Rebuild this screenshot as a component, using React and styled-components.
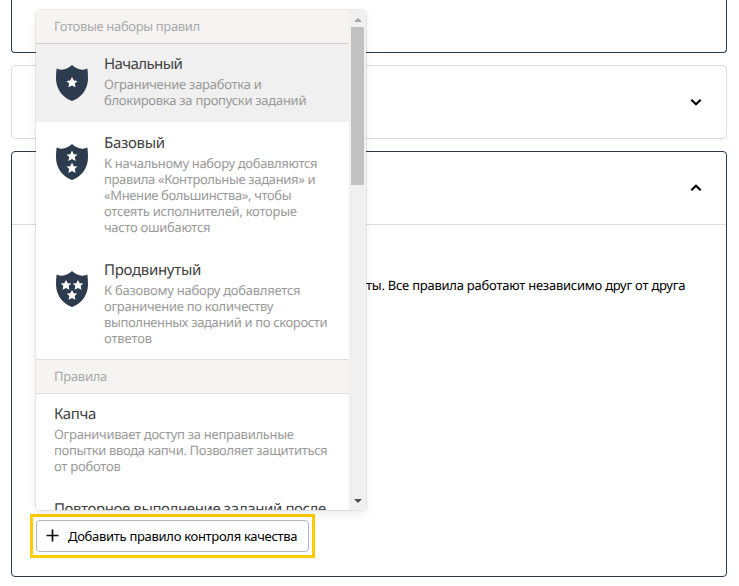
import React from "react";
import styled, { createGlobalStyle } from "styled-components";

const GlobalStyle = createGlobalStyle`
  * { box-sizing: border-box; }
  html, body { margin: 0; height: 586px; overflow: hidden; background: #fff; }
  body { font: 13px/16px "Noto Sans", "Open Sans", sans-serif; color: #000; text-rendering: geometricPrecision; }
`;

const Page = styled.main`
  position: relative;
  display: flex;
  flex-direction: column;
  gap: 12px;
  height: 586px;
  padding: 0 12px 9px 11px;
`;

const Card = styled.section`
  border: 1px solid ${(p) => (p.$active ? "#2b3a4e" : "#dcdcdc")};
  border-radius: 4px;
  background: #fff;
`;

const CardTail = styled(Card)`
  height: 53px;
  border-top: 0;
  border-radius: 0 0 4px 4px;
`;

const ClosedCard = styled(Card)`
  height: 74px;
`;

const OpenCard = styled(Card)`
  height: 426px;
  display: flex;
  flex-direction: column;
`;

const CardHeader = styled.header`
  display: flex;
  align-items: center;
  justify-content: flex-end;
  height: ${(p) => (p.$divided ? 73 : 72)}px;
  padding-right: 24px;
  ${(p) => p.$divided && "border-bottom: 1px solid #dcdcdc;"}
`;

const CardBody = styled.div`
  flex: 1;
  display: flex;
  flex-direction: column;
  justify-content: space-between;
  padding: 52px 40px 18px 18px;
`;

const Hint = styled.p`
  width: 320px;
  margin: 0;
  align-self: flex-end;
  white-space: nowrap;
  letter-spacing: -0.24px;
`;

const Highlight = styled.div`
  align-self: flex-start;
  width: 285px;
  height: 44px;
  padding: 3px;
  border: 3px solid #fc0;
`;

const AddButton = styled.button`
  display: flex;
  align-items: center;
  width: 273px;
  height: 32px;
  gap: 9px;
  padding: 0 0 1px 9px;
  border: 1px solid #b3b7bd;
  border-radius: 4px;
  background: #fff;
  color: #000;
  font: inherit;
  letter-spacing: -0.3px;
  white-space: nowrap;
`;

const Menu = styled.div`
  position: absolute;
  top: 10px;
  left: 36px;
  display: flex;
  width: 330px;
  height: 500px;
  overflow: hidden;
  border-radius: 4px;
  background: #fff;
`;

const MenuShadow = styled.div`
  position: absolute;
  top: 10px;
  left: 36px;
  width: 330px;
  height: 500px;
  border-radius: 4px;
  box-shadow: 0 0 0 1px rgba(0, 0, 0, 0.07), 0 4px 10px rgba(0, 0, 0, 0.08);
`;

const Options = styled.div`
  width: 313px;
  overflow: hidden;
`;

const GroupTitle = styled.div`
  height: ${(p) => (p.$first ? 34 : 35)}px;
  padding: 8px 18px 0;
  border-bottom: 1px solid ${(p) => (p.$first ? "#d0d0d0" : "#dedede")};
  ${(p) => !p.$first && "border-top: 1px solid #dedede;"}
  background: #f5f4f3;
  color: #a9a9a9;
`;

const Option = styled.div`
  display: flex;
  gap: 16px;
  height: ${(p) => p.$height}px;
  padding: ${(p) => (p.$selected || !p.$icon ? 10 : 11)}px 0 0 ${(p) => (p.$icon ? 20 : 18)}px;
  background: ${(p) => (p.$selected ? "#f0f0f0" : "#fff")};
`;

const OptionText = styled.div`
  min-width: 0;
`;

const Title = styled.div`
  height: 22px;
  color: #404040;
  font-size: 15px;
  line-height: 20px;
`;

const Description = styled.div`
  color: #999;
`;

const Line = styled.div`
  white-space: nowrap;
  letter-spacing: ${(p) => p.$track}px;
`;

const Scrollbar = styled.div`
  display: flex;
  flex-direction: column;
  align-items: center;
  width: 17px;
  background: #f0f0f0;
`;

const ScrollArrow = styled.div`
  display: flex;
  align-items: center;
  justify-content: center;
  width: 17px;
  height: 17px;
  padding-top: ${(p) => (p.$disabled ? 2 : 0)}px;
  padding-bottom: ${(p) => (p.$disabled ? 0 : 1)}px;
  color: ${(p) => (p.$disabled ? "#a3a3a3" : "#505050")};
`;

const ScrollTrack = styled.div`
  flex: 1;
`;

const ScrollThumb = styled.div`
  width: 13px;
  height: 158px;
  background: #c1c1c1;
`;

const ShieldIcon = styled.svg`
  flex: none;
  width: 32px;
  height: 36px;
  margin-top: 11px;
`;

const STAR =
  "M0-5.6 1.8-2 5.5-1.7 2.8.9 3.6 4.7 0 2.900-3.6 4.7-2.8.9-5.5-1.7-1.800-2Z";

function Shield({ stars }) {
  return (
    <ShieldIcon viewBox="0 0 32 36">
      <path
        d="M16 0C13.4 2.6 9 4.9 5.2 4.7 3.4 4.6 1.8 4.2.6 3.6.2 7 0 10 0 13.5 0 25 8 33.500 16 36 24 33.500 32 25 32 13.500 32 10 31.800 7 31.400 3.600 30.200 4.200 28.600 4.600 26.800 4.700 23 4.900 18.600 2.600 16 0Z"
        fill="#2c3b4e"
      />
      {stars.map(([x, y, s]) => (
        <path key={`${x}-${y}`} d={STAR} transform={`translate(${x} ${y}) scale(${s})`} fill="#fff" />
      ))}
    </ShieldIcon>
  );
}

function Chevron({ up }) {
  return (
    <svg width="12" height="8" viewBox="0 0 12 8">
      <path
        d={up ? "M1.300 6.300 6 1.800 10.700 6.300" : "M1.300 1.800 6 6.300 10.700 1.800"}
        fill="none"
        stroke="#000"
        strokeWidth="2.2"
      />
    </svg>
  );
}

const PRESETS = [
  {
    title: ["Начальный", -0.6],
    height: 78,
    selected: true,
    stars: [[16, 17.6, 1]],
    lines: [
      ["Ограничение заработка и", -0.26],
      ["блокировка за пропуски заданий", -0.275],
    ],
  },
  {
    title: ["Базовый", -0.3],
    height: 127,
    stars: [[16, 12.2, 1], [16, 24.2, 1]],
    lines: [
      ["К начальному набору добавляются", -0.323],
      ["правила «Контрольные задания» и", -0.346],
      ["«Мнение большинства», чтобы", -0.38],
      ["отсеять исполнителей, которые", -0.26],
      ["часто ошибаются", -0.3],
    ],
  },
  {
    title: ["Продвинутый", -0.3],
    height: 110,
    stars: [[10, 14.2, 0.95], [22, 14.2, 0.95], [16, 24.2, 0.95]],
    lines: [
      ["К базовому набору добавляется", -0.255],
      ["ограничение по количеству", -0.28],
      ["выполненных заданий и по скорости", -0.357],
      ["ответов", -0.14],
    ],
  },
];

const RULES = [
  {
    title: ["Капча", -0.4],
    height: 95,
    lines: [
      ["Ограничивает доступ за неправильные", -0.285],
      ["попытки ввода капчи. Позволяет защититься", -0.346],
      ["от роботов", -0.24],
    ],
  },
  { title: ["Повторное выполнение заданий после", -0.4], height: 40, lines: [] },
];

function MenuOption({ title, lines, stars, selected, height }) {
  return (
    <Option $selected={selected} $icon={Boolean(stars)} $height={height}>
      {stars && <Shield stars={stars} />}
      <OptionText>
        <Title>
          <Line $track={title[1]}>{title[0]}</Line>
        </Title>
        <Description>
          {lines.map(([text, track]) => (
            <Line key={text} $track={track}>{text}</Line>
          ))}
        </Description>
      </OptionText>
    </Option>
  );
}

export default function App() {
  return (
    <>
      <GlobalStyle />
      <Page>
        <CardTail $active />
        <ClosedCard>
          <CardHeader><Chevron /></CardHeader>
        </ClosedCard>
        <OpenCard $active>
          <CardHeader $divided><Chevron up /></CardHeader>
          <CardBody>
            <Hint>ты. Все правила работают независимо друг от друга</Hint>
            <Highlight>
              <AddButton>
                <svg width="13" height="13" viewBox="0 0 13 13">
                  <path d="M6.500 .5V12.500M.5 6.500H12.500" stroke="#111" strokeWidth="1.700" />
                </svg>
                Добавить правило контроля качества
              </AddButton>
            </Highlight>
          </CardBody>
        </OpenCard>
        <MenuShadow />
        <Menu>
          <Options>
            <GroupTitle $first><Line $track={-0.34}>Готовые наборы правил</Line></GroupTitle>
            {PRESETS.map((o) => <MenuOption key={o.title[0]} {...o} />)}
            <GroupTitle><Line $track={-0.27}>Правила</Line></GroupTitle>
            {RULES.map((o) => <MenuOption key={o.title[0]} {...o} />)}
          </Options>
          <Scrollbar>
            <ScrollArrow $disabled>
              <svg width="8" height="4" viewBox="0 0 8 4"><path d="M0 4 4 0 8 4Z" fill="currentColor" /></svg>
            </ScrollArrow>
            <ScrollThumb />
            <ScrollTrack />
            <ScrollArrow>
              <svg width="8" height="4" viewBox="0 0 8 4"><path d="M0 0 4 4 8 0Z" fill="currentColor" /></svg>
            </ScrollArrow>
          </Scrollbar>
        </Menu>
      </Page>
    </>
  );
}
